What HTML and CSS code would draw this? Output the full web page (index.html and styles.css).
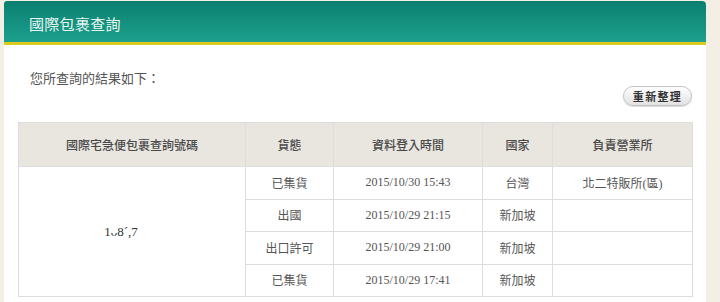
FILE: index.html
```html
<!DOCTYPE html>
<html lang="zh-TW">
<head>
    <meta charset="UTF-8">
    <title>國際包裹查詢</title>
    <link rel="stylesheet" href="styles.css">
</head>
<body>
    <!-- 查詢結果面板 -->
    <div class="panel">
        <div class="panel-head">
            <h2>國際包裹查詢</h2>
        </div>

        <div class="panel-body">
            <p class="intro">您所查詢的結果如下：</p>

            <div class="toolbar">
                <button class="btn-refresh" type="button">重新整理</button>
            </div>

            <table class="result-table">
                <colgroup>
                    <col class="col-no">
                    <col class="col-status">
                    <col class="col-time">
                    <col class="col-country">
                    <col class="col-office">
                </colgroup>
                <thead>
                    <tr>
                        <th>國際宅急便包裹查詢號碼</th>
                        <th>貨態</th>
                        <th>資料登入時間</th>
                        <th>國家</th>
                        <th>負責營業所</th>
                    </tr>
                </thead>
                <tbody>
                    <tr>
                        <td class="cell-no" rowspan="4">1ᴗ8ˊ,7</td>
                        <td>已集貨</td>
                        <td>2015/10/30 15:43</td>
                        <td>台灣</td>
                        <td>北二特販所(區)</td>
                    </tr>
                    <tr>
                        <td>出國</td>
                        <td>2015/10/29 21:15</td>
                        <td>新加坡</td>
                        <td></td>
                    </tr>
                    <tr>
                        <td>出口許可</td>
                        <td>2015/10/29 21:00</td>
                        <td>新加坡</td>
                        <td></td>
                    </tr>
                    <tr>
                        <td>已集貨</td>
                        <td>2015/10/29 17:41</td>
                        <td>新加坡</td>
                        <td></td>
                    </tr>
                </tbody>
            </table>
        </div>
    </div>
</body>
</html>
```

FILE: styles.css
```css
* {
    margin: 0;
    padding: 0;
    box-sizing: border-box;
}

body {
    font-family: "Liberation Serif", "Noto Sans CJK TC", serif;
    font-size: 12px;
    color: #555555;
    background: #f3efe4;
    padding: 1px 14px 0 4px;
}

/* 面板 */
.panel {
    background: #ffffff;
    border-radius: 3px 4px 0 0;
    min-height: 310px;
}

.panel-head {
    height: 44px;
    background: linear-gradient(#0b7f6f, #1ca08d);
    border-bottom: 3px solid #dccb1e;
    border-radius: 3px 4px 0 0;
    padding-left: 25px;
    display: flex;
    align-items: center;
}

.panel-head h2 {
    font-family: "Noto Sans CJK TC", sans-serif;
    font-size: 15px;
    font-weight: 400;
    color: #eaf6f3;
    letter-spacing: 0.02em;
    margin-top: 3px;
}

.panel-body {
    padding: 24px 14px 0 14px;
}

.intro {
    font-family: "Noto Sans CJK TC", sans-serif;
    font-size: 13px;
    line-height: 18px;
    color: #555555;
    padding-left: 12px;
}

/* 重新整理按鈕 */
.toolbar {
    display: flex;
    justify-content: flex-end;
    margin-top: -1px;
}

.btn-refresh {
    width: 69px;
    height: 20px;
    font-family: "Noto Sans CJK TC", sans-serif;
    font-size: 11px;
    font-weight: 700;
    letter-spacing: 0.12em;
    color: #333333;
    background: linear-gradient(#ffffff, #e2e2e2);
    border: 1px solid #c4c4c4;
    border-radius: 10px;
    box-shadow: 0 1px 1px rgba(0, 0, 0, 0.15);
    cursor: pointer;
}

/* 查詢結果表格 */
.result-table {
    width: 100%;
    margin-top: 16px;
    border-collapse: collapse;
    table-layout: fixed;
    border: 1px solid #dddddd;
}

.col-no { width: 227px; }
.col-status { width: 88px; }
.col-time { width: 149px; }
.col-country { width: 70px; }
.col-office { width: 140px; }

.result-table th {
    height: 44px;
    background: #e9e6df;
    font-family: "Noto Sans CJK TC", sans-serif;
    font-size: 12px;
    font-weight: 500;
    color: #4a4a4a;
    border: 1px solid #dddddd;
    text-align: center;
}

.result-table td {
    height: 32.5px;
    border: 1px solid #dddddd;
    text-align: center;
    color: #555555;
}

.result-table .cell-no {
    font-size: 13px;
    color: #333333;
    padding-right: 22px;
}
```
